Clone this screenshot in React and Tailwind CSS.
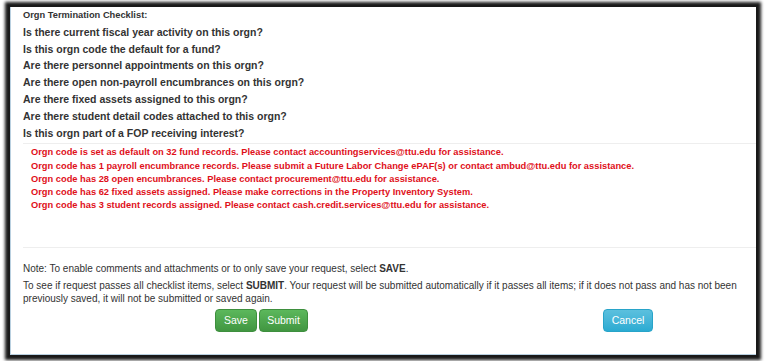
export default function App() {
  const questions = [
    "Is there current fiscal year activity on this orgn?",
    "Is this orgn code the default for a fund?",
    "Are there personnel appointments on this orgn?",
    "Are there open non-payroll encumbrances on this orgn?",
    "Are there fixed assets assigned to this orgn?",
    "Are there student detail codes attached to this orgn?",
    "Is this orgn part of a FOP receiving interest?",
  ];
  const errors = [
    "Orgn code is set as default on 32 fund records. Please contact accountingservices@ttu.edu for assistance.",
    "Orgn code has 1 payroll encumbrance records. Please submit a Future Labor Change ePAF(s) or contact ambud@ttu.edu for assistance.",
    "Orgn code has 28 open encumbrances. Please contact procurement@ttu.edu for assistance.",
    "Orgn code has 62 fixed assets assigned. Please make corrections in the Property Inventory System.",
    "Orgn code has 3 student records assigned. Please contact cash.credit.services@ttu.edu for assistance.",
  ];
  return (
    <div
      className="w-[768px] h-[361px] bg-white overflow-hidden pl-[10px] pt-[7px]"
      style={{ fontFamily: '"Liberation Sans", Arial, sans-serif' }}
    >
      <div className="w-[746px] h-[348px] bg-white border-l border-b border-[#b9d0e0] shadow-[0_0_3px_5px_rgba(0,0,0,0.9)] flex flex-col">
        <div className="pl-[12px] text-[10.5px] font-bold text-[#333] leading-[16.8px]">
          <div className="text-[9.3px]">Orgn Termination Checklist:</div>
          {questions.map((q) => (
            <div key={q}>{q}</div>
          ))}
        </div>
        <div className="ml-[12px] mt-[2px] h-[105px] border-t border-b border-[#eeeeee] pt-[2px] pl-[8px] text-[9.3px] font-bold text-[#e0101a] leading-[13.25px]">
          {errors.map((e) => (
            <div key={e}>{e}</div>
          ))}
        </div>
        <div className="pl-[12px] pr-[10px] text-[10px] text-[#333]">
          <p className="mt-[14px] leading-[13px]">
            Note: To enable comments and attachments or to only save your request, select <b>SAVE</b>.
          </p>
          <p className="mt-[5px] leading-[12.5px]">
            To see if request passes all checklist items, select <b>SUBMIT</b>. Your request will be submitted automatically if it passes all items; if it does not pass and has not been previously saved, it will not be submitted or saved again.
          </p>
          <div className="flex mt-[4px] pl-[192px]">
            <button className="w-[42px] h-[23px] rounded-[4px] text-white text-[10.5px] bg-gradient-to-b from-[#5cb85c] to-[#419641] border border-[#3e8f3e]">
              Save
            </button>
            <button className="ml-[2px] w-[49px] h-[23px] rounded-[4px] text-white text-[10.5px] bg-gradient-to-b from-[#5cb85c] to-[#419641] border border-[#3e8f3e]">
              Submit
            </button>
            <button className="ml-[295px] w-[50px] h-[23px] rounded-[4px] text-white text-[10.5px] bg-gradient-to-b from-[#5bc0de] to-[#2aabd2] border border-[#28a4c9]">
              Cancel
            </button>
          </div>
        </div>
      </div>
    </div>
  );
}
